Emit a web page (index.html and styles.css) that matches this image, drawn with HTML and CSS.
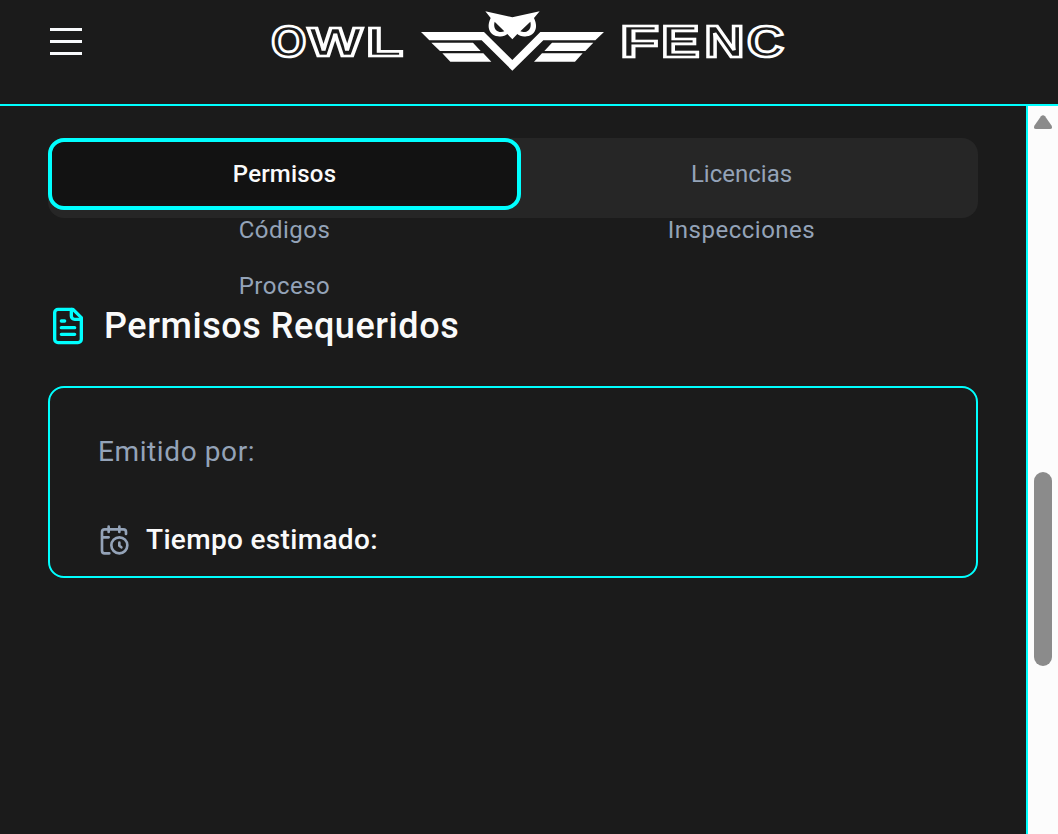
FILE: index.html
```html
<!DOCTYPE html>
<html lang="es">
<head>
<meta charset="utf-8">
<title>Owl Fenc</title>
<link rel="stylesheet" href="styles.css">
</head>
<body>
<header class="topbar">
  <button class="menu" aria-label="Menú"><span></span><span></span><span></span></button>
  <svg class="logo" width="520" height="80" viewBox="268 0 520 80" role="img" aria-label="OWL FENC">
    <g class="wordmark">
      <text x="271.3" y="56.5" textLength="35" lengthAdjust="spacingAndGlyphs">O</text>
      <g class="short">
        <text x="308" y="55.6" textLength="54.5" lengthAdjust="spacingAndGlyphs">W</text>
        <text x="366" y="55.6" textLength="37" lengthAdjust="spacingAndGlyphs">L</text>
      </g>
      <text x="620" y="56.5" textLength="39" lengthAdjust="spacingAndGlyphs">F</text>
      <text x="661" y="56.5" textLength="38.6" lengthAdjust="spacingAndGlyphs">E</text>
      <text x="704.2" y="56.5" textLength="40.2" lengthAdjust="spacingAndGlyphs">N</text>
      <text x="747" y="56.5" textLength="37" lengthAdjust="spacingAndGlyphs">C</text>
    </g>
    <g class="owl" transform="translate(410 0) scale(.33333)">
      <path d="M33 96H222L307 180L391 96H582L556 121H400L307 212L215 121H58Z"/>
      <path d="M64 128H189L212 153H90Z M97 160H220L244 185H121Z"/>
      <path d="M550 128H426L403 153H526Z M518 160H396L372 185H495Z"/>
      <path d="M226 34L307 52L389 34L372 54C386 83 375 105 350 109C338 111 328 108 322 102L307 118L292 102C286 108 276 111 264 109C239 105 228 83 242 54Z"/>
      <path class="eye" d="M254 65L283 94C266 101 247 90 254 65Z M361 65L331 94C348 101 367 90 361 65Z"/>
    </g>
  </svg>
</header>
<div class="body">
  <main class="content">
    <nav class="tabs">
      <a class="tab active">Permisos</a>
      <a class="tab licencias">Licencias</a>
      <a class="tab codigos">Códigos</a>
      <a class="tab inspecciones">Inspecciones</a>
      <a class="tab proceso">Proceso</a>
    </nav>
    <h2 class="heading">
      <svg class="icon" width="40" height="40" viewBox="0 0 24 24"><path d="M15 2H6a2 2 0 0 0-2 2v16a2 2 0 0 0 2 2h12a2 2 0 0 0 2-2V7Z"/><path d="M14 2v4a2 2 0 0 0 2 2h4M10 9H8M16 13H8M16 17H8"/></svg>
      <span>Permisos Requeridos</span>
    </h2>
    <section class="card">
      <p class="issuer">Emitido por:</p>
      <div class="time">
        <svg class="icon" width="32" height="32" viewBox="0 0 24 24"><path d="M21 7.5V6a2 2 0 0 0-2-2H5a2 2 0 0 0-2 2v14a2 2 0 0 0 2 2h3.5M16 2v4M8 2v4M3 10h5M17.5 17.5 16 16.3V14"/><circle cx="16" cy="16" r="6"/></svg>
        <span>Tiempo estimado:</span>
      </div>
    </section>
  </main>
  <aside class="scrollbar">
    <svg width="18" height="14" viewBox="0 0 18 14"><path d="M7 1.2Q9-.8 11 1.2L17.5 10.5Q19 14 16 14H2Q-1 14 .5 10.5Z"/></svg>
    <div class="thumb"></div>
  </aside>
</div>
</body>
</html>
```
FILE: styles.css
```css
* { box-sizing: border-box; }
body {
  margin: 0;
  height: 834px;
  overflow: hidden;
  display: flex;
  flex-direction: column;
  background: #1b1b1b;
  color: #fafafa;
  font-family: Roboto, "Liberation Sans", sans-serif;
}
.topbar {
  height: 106px;
  flex: none;
  display: flex;
  align-items: flex-start;
  border-bottom: 2px solid #0ff;
}
.menu {
  width: 32px;
  margin: 27.5px 186px 0 50px;
  padding: 0;
  border: 0;
  background: none;
  display: flex;
  flex-direction: column;
  gap: 9px;
}
.menu span { width: 32px; height: 3px; background: #f8fafc; }
.logo { display: block; }
.wordmark {
  font: bold 43.6px "Liberation Sans", sans-serif;
  fill: #1b1b1b;
  stroke: #fff;
  stroke-width: 2.7px;
}
.short { font-size: 41px; }
.owl { fill: #fff; }
.eye { fill: #1b1b1b; }
.body { flex: 1; display: flex; }
.content { flex: 1; padding: 32px 48px 0; }
.tabs {
  height: 80px;
  padding: 8px;
  display: grid;
  grid-template-columns: 1fr 1fr;
  grid-auto-rows: 56px;
  border-radius: 16px;
  background: #262626;
}
.tab {
  display: flex;
  align-items: center;
  justify-content: center;
  font-size: 24px;
  letter-spacing: .5px;
  color: #94a3b8;
}
.licencias { letter-spacing: 0; }
.active {
  margin: -8px;
  border: 4px solid #0ff;
  border-radius: 16px;
  background: #121212;
  color: #fafafa;
  font-weight: 500;
  letter-spacing: .2px;
}
.heading {
  height: 40px;
  margin: 88px 0 40px;
  display: flex;
  align-items: center;
  gap: 16px;
  font-size: 36px;
  font-weight: 500;
  letter-spacing: .57px;
}
.icon { flex: none; fill: none; stroke: currentColor; stroke-width: 2; stroke-linecap: round; stroke-linejoin: round; }
.heading .icon { color: #0ff; }
.card {
  height: 192px;
  padding: 44px 48px 0;
  border: 2px solid #0ff;
  border-radius: 16px;
  font-size: 28px;
  line-height: 40px;
}
.issuer { margin: 0 0 48px; letter-spacing: .6px; color: #94a3b8; }
.time { display: flex; align-items: center; gap: 16px; font-weight: 500; letter-spacing: .33px; }
.time .icon { color: #94a3b8; }
.scrollbar {
  width: 32px;
  padding: 9px 0 0 6px;
  border-left: 2px solid #0ff;
  background: #fcfcfc;
}
.scrollbar svg { display: block; fill: #8b8b8b; }
.thumb { width: 18px; height: 194px; margin-top: 343px; border-radius: 9px; background: #8b8b8b; }
```
